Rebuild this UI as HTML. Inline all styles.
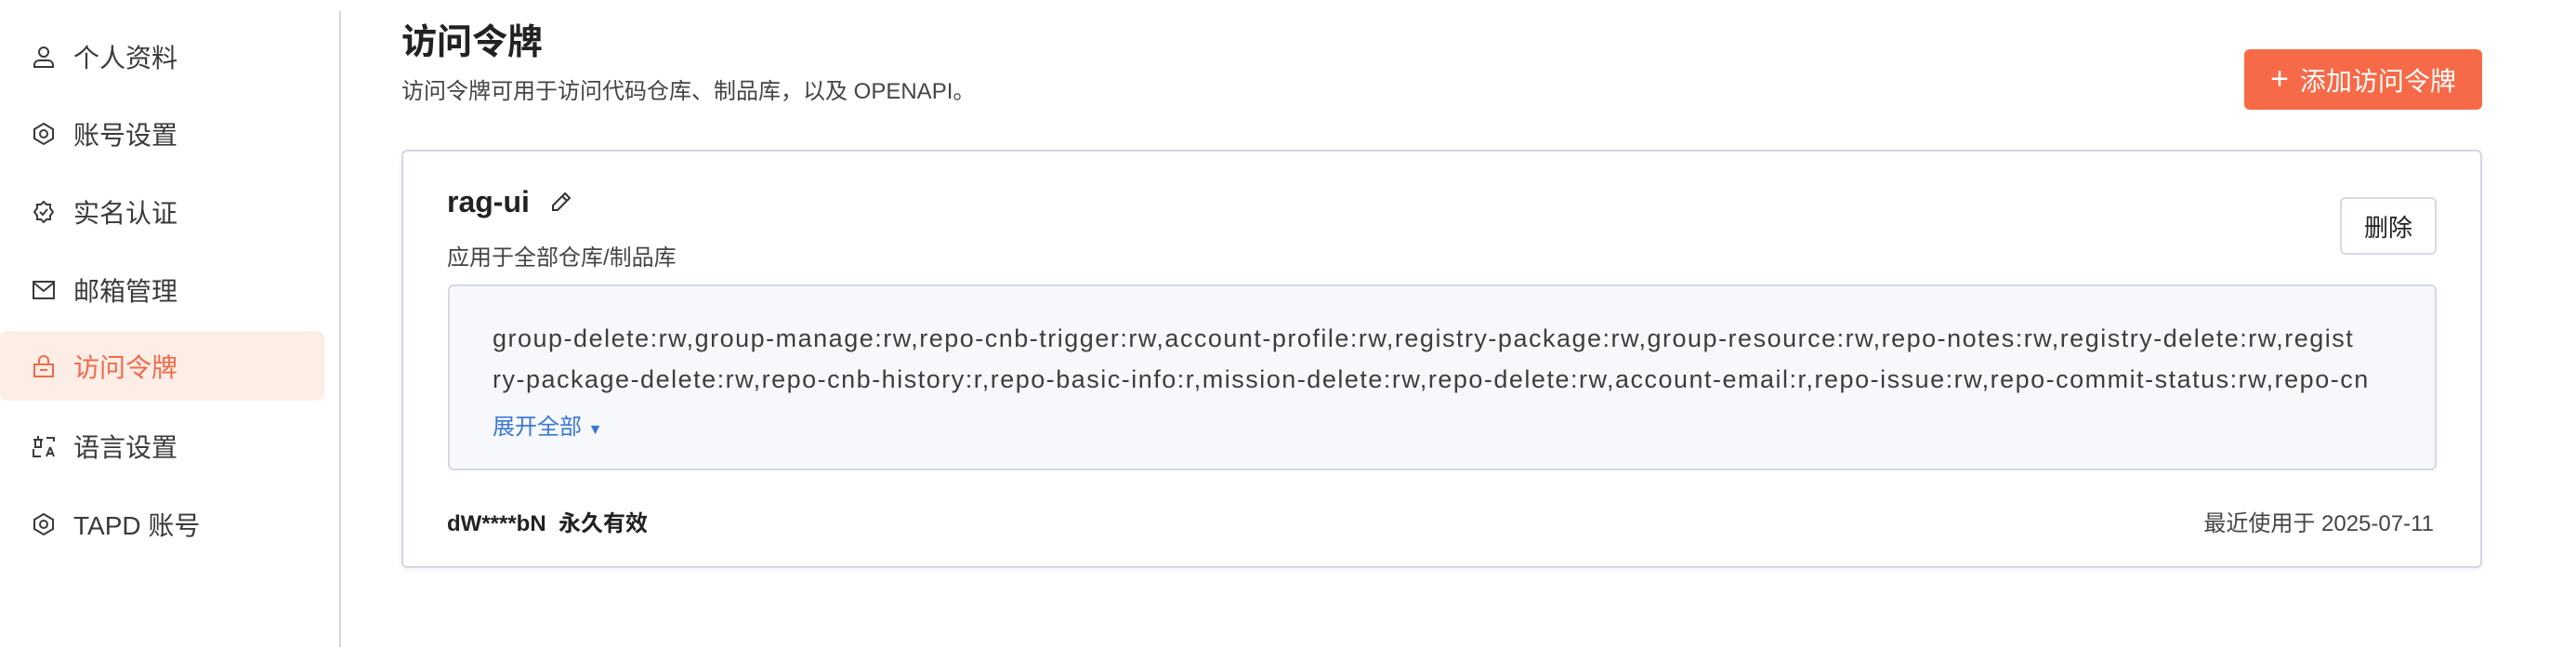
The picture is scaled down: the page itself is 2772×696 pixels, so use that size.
<!DOCTYPE html>
<html><head><meta charset="utf-8"><style>
*{margin:0;padding:0;box-sizing:border-box}
body{width:2772px;height:696px;background:#fff;font-family:"Liberation Sans","Noto Sans CJK SC",sans-serif;color:#2b2b2b;position:relative;overflow:hidden}
.a{position:absolute;white-space:nowrap}
.item{position:absolute;left:0;width:349px;height:75px;display:flex;align-items:center;font-size:28px;color:#3a3a3a}
.item svg{position:absolute;left:34px;width:26px;height:26px}
.item span{position:absolute;left:79px}
.active{background:#fdede7;border-radius:8px;color:#f26a47}
</style></head><body>
<div class="a" style="left:365px;top:12px;width:2px;height:684px;background:#d3d6df"></div>

<div class="item" style="top:23px"><svg viewBox="0 0 26 26" fill="none" stroke="#3a3a3a" stroke-width="2"><circle cx="13" cy="8" r="5"/><path d="M3 24v-2a5 5 0 0 1 5-5h10a5 5 0 0 1 5 5v2z"/></svg><span>个人资料</span></div>
<div class="item" style="top:106px"><svg viewBox="0 0 26 26" fill="none" stroke="#3a3a3a" stroke-width="2"><path d="M13 2l10 6v10l-10 6-10-6V8z"/><circle cx="13" cy="13" r="4"/></svg><span>账号设置</span></div>
<div class="item" style="top:190px"><svg viewBox="0 0 26 26" fill="none" stroke="#3a3a3a" stroke-width="2"><path d="M13 2l3 3h4v4l3 4-3 4v4h-4l-3 3-3-3H6v-4l-3-4 3-4V5h4z"/><path d="M9 13l3 3 5-6"/></svg><span>实名认证</span></div>
<div class="item" style="top:274px"><svg viewBox="0 0 26 26" fill="none" stroke="#3a3a3a" stroke-width="2"><rect x="2" y="4" width="22" height="18"/><path d="M2 5l11 9 11-9"/></svg><span>邮箱管理</span></div>
<div class="item active" style="top:356px;height:75px"><svg viewBox="0 0 26 26" fill="none" stroke="#f26a47" stroke-width="2"><path d="M8 11V7a5 5 0 0 1 10 0v4"/><rect x="3" y="11" width="20" height="13"/><path d="M9 17h8"/></svg><span style="color:#f26a47">访问令牌</span></div>
<div class="item" style="top:442px"><svg viewBox="0 0 26 26" fill="none" stroke="#3a3a3a" stroke-width="2"><path d="M2 6h10M7 2v4M4 6v8h6V6M2 16v8h8M16 4h8v4M20 14l-4 10M20 14l4 10M17 21h6"/></svg><span>语言设置</span></div>
<div class="item" style="top:526px"><svg viewBox="0 0 26 26" fill="none" stroke="#3a3a3a" stroke-width="2"><path d="M13 2l10 6v10l-10 6-10-6V8z"/><circle cx="13" cy="13" r="4"/></svg><span>TAPD 账号</span></div>

<div class="a" style="left:432px;top:14px;font-size:38px;font-weight:bold;color:#222">访问令牌</div>
<div class="a" style="left:432px;top:78px;font-size:24px;color:#444">访问令牌可用于访问代码仓库、制品库，以及 OPENAPI。</div>

<div class="a" style="left:2415px;top:53px;width:256px;height:65px;background:#f76a47;border-radius:6px;color:#fff;font-size:28px;display:flex;align-items:center;justify-content:center"><span style="font-size:34px;margin-right:12px;font-weight:300">+</span>添加访问令牌</div>

<div class="a" style="left:432px;top:161px;width:2239px;height:450px;border:2px solid #d3d7e2;border-radius:6px;box-shadow:0 2px 6px rgba(0,0,0,.06)"></div>

<div class="a" style="left:481px;top:199px;font-size:32px;font-weight:bold;color:#222">rag-ui</div>
<svg class="a" style="left:592px;top:205px" width="24" height="24" viewBox="0 0 24 24" fill="none" stroke="#333" stroke-width="2"><path d="M16 3l5 5L8 21H3v-5z M13 6l5 5"/></svg>
<div class="a" style="left:481px;top:257px;font-size:24px;color:#444">应用于全部仓库/制品库</div>

<div class="a" style="left:2518px;top:212px;width:104px;height:62px;border:2px solid #d5d9e3;border-radius:6px;font-size:26px;display:flex;align-items:center;justify-content:center;color:#222">删除</div>

<div class="a" style="left:482px;top:306px;width:2140px;height:200px;background:#f7f8fc;border:2px solid #d5d9e3;border-radius:6px"></div>
<div class="a" style="left:530px;top:342px;font-size:27px;letter-spacing:1.5px;color:#3d3d3d;line-height:44px">group-delete:rw,group-manage:rw,repo-cnb-trigger:rw,account-profile:rw,registry-package:rw,group-resource:rw,repo-notes:rw,registry-delete:rw,regist<br>ry-package-delete:rw,repo-cnb-history:r,repo-basic-info:r,mission-delete:rw,repo-delete:rw,account-email:r,repo-issue:rw,repo-commit-status:rw,repo-cn</div>
<div class="a" style="left:530px;top:439px;font-size:24px;color:#3a78d6">展开全部 <span style="font-size:16px">▼</span></div>

<div class="a" style="left:481px;top:543px;font-size:24px;font-weight:bold;color:#222">dW****bN&nbsp; 永久有效</div>
<div class="a" style="right:153px;top:543px;font-size:24px;color:#444">最近使用于 2025-07-11</div>
</body></html>
